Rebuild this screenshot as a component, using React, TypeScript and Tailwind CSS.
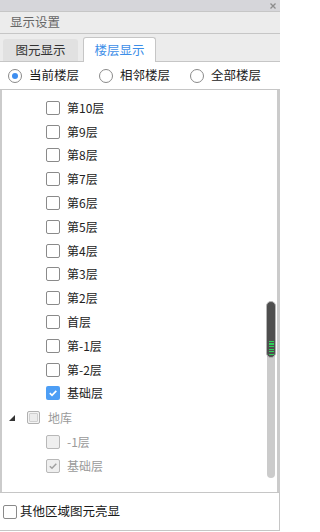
import React from "react";

const floors = ["第10层", "第9层", "第8层", "第7层", "第6层", "第5层", "第4层", "第3层", "第2层", "首层", "第-1层", "第-2层"];

function Box({ checked = false, disabled = false }: { checked?: boolean; disabled?: boolean }) {
  if (checked && !disabled) {
    return (
      <span className="w-[14px] h-[14px] rounded-[2px] bg-[#4d9ef5] flex items-center justify-center shrink-0">
        <svg width="10" height="10" viewBox="0 0 10 10">
          <path d="M1.8 5.2 L4 7.3 L8.3 2.8" fill="none" stroke="#fff" strokeWidth="1.7" />
        </svg>
      </span>
    );
  }
  if (disabled) {
    return (
      <span className="w-[14px] h-[14px] rounded-[2px] bg-[#efefef] border border-[#b8b8b8] flex items-center justify-center shrink-0">
        {checked && (
          <svg width="10" height="10" viewBox="0 0 10 10">
            <path d="M1.8 5.2 L4 7.3 L8.3 2.8" fill="none" stroke="#a0a0a0" strokeWidth="1.5" />
          </svg>
        )}
      </span>
    );
  }
  return <span className="w-[14px] h-[14px] rounded-[2px] bg-white border border-[#8a8a8a] shrink-0" />;
}

function Radio({ on, label }: { on?: boolean; label: string }) {
  return (
    <div className="flex items-center gap-[7px]">
      <span className="w-[14px] h-[14px] rounded-full border border-[#8a8a8a] bg-white flex items-center justify-center">
        {on && <span className="w-[6px] h-[6px] rounded-full bg-[#3d8ef0]" />}
      </span>
      <span className="text-[#1a1a1a]">{label}</span>
    </div>
  );
}

export default function App() {
  return (
    <div
      className="w-[280px] h-[532px] flex flex-col bg-white text-[12px] leading-none overflow-hidden"
      style={{ fontFamily: '"Microsoft YaHei", "Noto Sans CJK SC", "Noto Sans", sans-serif' }}
    >
      <div className="h-[11px] bg-[#d6d6da] flex items-center justify-end pr-[4px] shrink-0">
        <svg width="6" height="6" viewBox="0 0 6 6">
          <path d="M0.5 0.5 L5.5 5.5 M5.5 0.5 L0.5 5.5" stroke="#8c8c8c" strokeWidth="1.3" />
        </svg>
      </div>
      <div className="h-[23px] bg-[#ececec] border-t border-[#c6c6c6] border-b border-[#c6c6c6] flex items-center pl-[10px] text-[#666] text-[12.5px] shrink-0">
        显示设置
      </div>
      <div className="h-[28px] bg-[#ececec] flex items-end gap-[5px] pl-[3px] border-b border-[#c6c6c6] shrink-0">
        <div className="w-[75px] h-[22px] bg-[#e1e1e1] rounded-t-[3px] flex items-center justify-center text-[#333] text-[12.5px]">
          图元显示
        </div>
        <div className="w-[73px] h-[25px] bg-white border border-[#c6c6c6] border-b-0 rounded-t-[3px] flex items-center justify-center text-[#3d8ee8] text-[12.5px] -mb-px relative">
          楼层显示
        </div>
      </div>
      <div className="h-[28px] flex items-center pl-[8px] gap-[20px] border-b border-[#c6c6c6] shrink-0 text-[12.5px]">
        <Radio on label="当前楼层" />
        <Radio label="相邻楼层" />
        <Radio label="全部楼层" />
      </div>
      <div className="flex-1 flex relative min-h-0">
        <div className="w-[2px] bg-[#cbcbcb] shrink-0" />
        <div className="flex-1 flex flex-col pt-[6px] text-[#222]">
          {floors.map((f) => (
            <div key={f} className="h-[23.8px] flex items-center pl-[44px] gap-[7px]">
              <Box />
              <span>{f}</span>
            </div>
          ))}
          <div className="h-[23.8px] flex items-center pl-[44px] gap-[7px]">
            <Box checked />
            <span>基础层</span>
          </div>
          <div className="h-[24.5px] flex items-center pl-[7px]">
            <svg width="6" height="6" viewBox="0 0 6 6" className="mr-[12px]">
              <polygon points="6,0 6,6 0,6" fill="#333" />
            </svg>
            <span className="w-[13px] h-[13px] rounded-[2px] border border-[#b0b0b0] bg-[#f4f4f4] flex items-center justify-center shrink-0">
              <span className="w-[9px] h-[9px] rounded-[1px] border border-[#cfcfcf] bg-[#ececec]" />
            </span>
            <span className="ml-[8px] text-[#9a9a9a]">地库</span>
          </div>
          <div className="h-[23.8px] flex items-center pl-[44px] gap-[7px]">
            <Box disabled />
            <span className="text-[#9a9a9a]">-1层</span>
          </div>
          <div className="h-[23.8px] flex items-center pl-[44px] gap-[7px]">
            <Box disabled checked />
            <span className="text-[#9a9a9a]">基础层</span>
          </div>
        </div>
        <div className="w-[3px] bg-[#cbcbcb] shrink-0" />
        <div className="absolute left-[267px] top-[219px] w-[8px] h-[169px] bg-[#cbcbcb] rounded-b-[4px]" />
        <div className="absolute left-[266px] top-[211px] w-[10px] h-[57px] rounded-full bg-[#4e4e4e] border border-[#b5b5b5] flex flex-col items-center justify-end pb-[2px] gap-[1.3px]">
          <span className="w-[5px] h-[1.3px] bg-[#2fd35a]" />
          <span className="w-[5px] h-[1.3px] bg-[#2fd35a]" />
          <span className="w-[5px] h-[1.3px] bg-[#2fd35a]" />
          <span className="w-[5px] h-[1.3px] bg-[#2fd35a]" />
          <span className="w-[5px] h-[1.3px] bg-[#2fd35a]" />
          <span className="w-[5px] h-[1.3px] bg-[#2fd35a]" />
        </div>
      </div>
      <div className="h-[39px] border-t border-b border-r border-[#c6c6c6] flex items-center pl-[3px] gap-[3px] shrink-0 mb-[1px] text-[12.5px] text-[#1a1a1a]">
        <Box />
        <span>其他区域图元亮显</span>
      </div>
    </div>
  );
}
